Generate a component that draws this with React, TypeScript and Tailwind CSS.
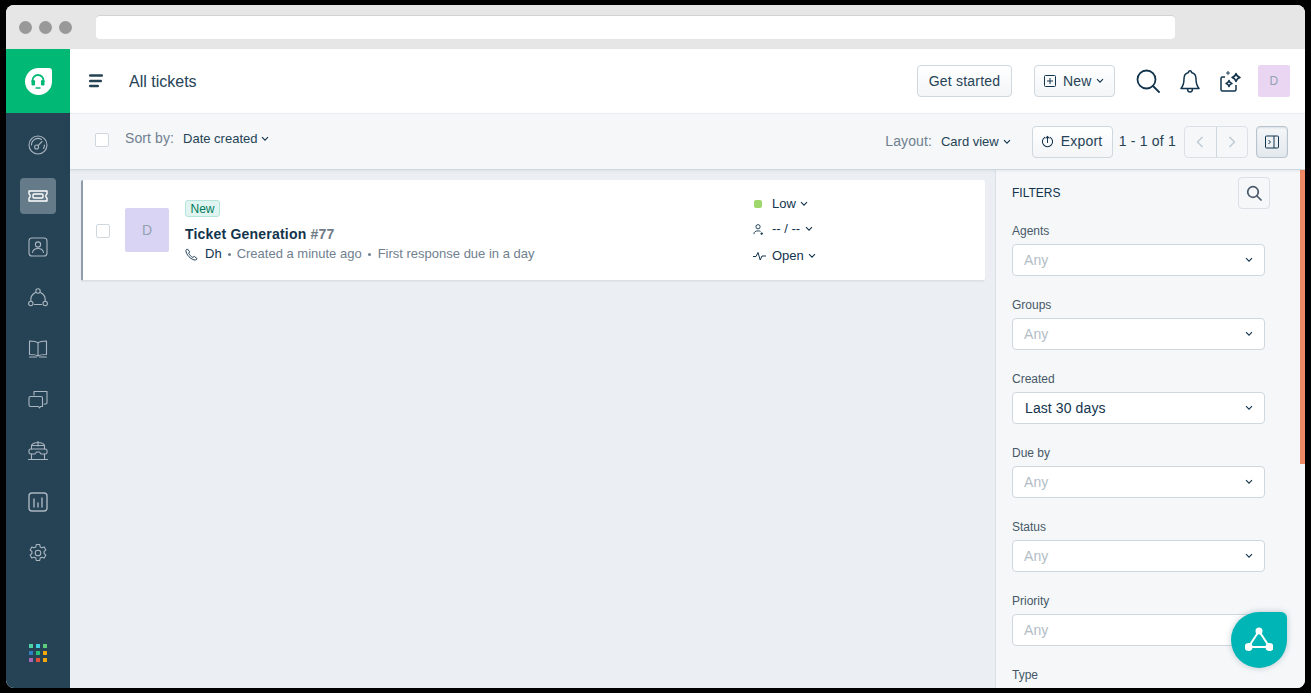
import React from "react";

const Chev = ({ className = "" }: { className?: string }) => (
  <svg viewBox="0 0 8 6" width="8" height="6" className={className} fill="none" stroke="#12344d" strokeWidth="1.1">
    <path d="M1 1.2 4 4.2 7 1.2" />
  </svg>
);

const NavIcon = ({ children }: { children: React.ReactNode }) => (
  <svg viewBox="0 0 20 20" width="20" height="20" fill="none" stroke="#aab6c0" strokeWidth="1.1" strokeLinecap="round" strokeLinejoin="round">
    {children}
  </svg>
);

const nav: React.ReactNode[] = [
  <NavIcon>
    <circle cx="10" cy="10" r="9" />
    <path d="M3.5 10a6.5 6.5 0 0 1 10-5.5M16.5 10a6.5 6.5 0 0 1-1 3.4" />
    <circle cx="8.6" cy="12" r="2" />
    <path d="M10 10.6 14 6.5" />
  </NavIcon>,
  <svg viewBox="0 0 20 20" width="20" height="20" fill="none" stroke="#fff" strokeWidth="1.4" strokeLinejoin="round">
    <path d="M1 4h18v2.8a2.6 2.6 0 0 0 0 4.4V14H1v-2.8a2.6 2.6 0 0 0 0-4.4z" transform="translate(0 1)" />
    <rect x="5" y="7" width="10" height="4" rx="1" transform="translate(0 1)" />
  </svg>,
  <NavIcon>
    <rect x="1" y="1" width="18" height="18" rx="3" />
    <circle cx="10" cy="7.5" r="2.6" />
    <path d="M4.5 15.5c.6-3 2.8-4 5.5-4s4.9 1 5.5 4" />
  </NavIcon>,
  <NavIcon>
    <circle cx="10" cy="3" r="2.2" />
    <circle cx="2.8" cy="15.5" r="2.2" />
    <circle cx="17.2" cy="15.5" r="2.2" />
    <path d="M7.5 4.5a8.5 8.5 0 0 0-4.7 8.500M12.5 4.5a8.5 8.5 0 0 1 4.7 8.500M6.5 16.5h7" />
  </NavIcon>,
  <NavIcon>
    <path d="M10 4C8.5 2.5 5 2 1.5 2v13.5c3.500 0 7 .5 8.500 1.500 1.500-1 5-1.500 8.500-1.500V2C15 2 11.500 2.500 10 4zM10 4v13M1.5 18h7M11.500 18h7" />
  </NavIcon>,
  <NavIcon>
    <path d="M6 5V1.500h13v11a1.500 1.500 0 0 1-1.500 1.500h-1.500" />
    <path d="M2.500 6.500h10.500a1.500 1.500 0 0 1 1.500 1.500v8.500h-2l-1 1.500-1-1.500H2.500A1.500 1.500 0 0 1 1 15V8a1.500 1.500 0 0 1 1.500-1.500z" />
  </NavIcon>,
  <NavIcon>
    <path d="M3.500 8V4.500C3.500 3 6.500 1.500 10 1.500s6.500 1.500 6.500 3V8M10 .5V5M3.500 4.500h13" />
    <path d="M1 9.500c0-1 .8-1.500 1.800-1.500h14.400c1 0 1.800.5 1.800 1.500v2c0 1-.8 1.500-1.800 1.500H13l-1.500-2h-3L7 13H2.800c-1 0-1.800-.5-1.800-1.500z" />
    <path d="M3.500 13v5.500M16.500 13v5.500M.5 18.500h19" />
  </NavIcon>,
  <NavIcon>
    <rect x="1" y="1" width="18" height="18" rx="3" strokeWidth="1.4" />
    <path d="M6 7v8M10 11v4M14 6v9" strokeWidth="1.4" />
  </NavIcon>,
  <NavIcon>
    <path d="M8.300 1.500h3.400l.5 2.400 1.700.9 2.300-.9 1.700 3-1.800 1.600v2l1.800 1.600-1.700 3-2.300-.9-1.700.9-.5 2.400H8.300l-.5-2.400-1.700-.9-2.300.9-1.700-3 1.800-1.600v-2L2.100 6.900l1.700-3 2.300.9 1.700-.9z" />
    <circle cx="10" cy="10" r="2.8" />
  </NavIcon>,
];

const dots = ["#4fd1a5", "#3fd0e0", "#5ccb7c", "#2f7fc1", "#27c37a", "#f5a70a", "#a568b8", "#e5503a", "#f5a70a"];

const filters = [
  { label: "Agents", value: "Any" },
  { label: "Groups", value: "Any" },
  { label: "Created", value: "Last 30 days", on: true },
  { label: "Due by", value: "Any" },
  { label: "Status", value: "Any" },
  { label: "Priority", value: "Any" },
];

export default function App() {
  return (
    <div className="h-[693px] w-[1311px] overflow-hidden bg-black pt-[5px] pl-[6px] font-['Liberation_Sans',Arial,sans-serif] text-[#12344d]">
      <div className="relative flex h-[683px] w-[1299px] flex-col overflow-hidden rounded-[8px] bg-white">
        {/* browser chrome */}
        <div className="flex h-[44px] shrink-0 items-center bg-[#e6e6e6] pl-[13px]">
          <div className="flex gap-[7px]">
            <span className="h-[13px] w-[13px] rounded-full bg-[#999]" />
            <span className="h-[13px] w-[13px] rounded-full bg-[#999]" />
            <span className="h-[13px] w-[13px] rounded-full bg-[#999]" />
          </div>
          <div className="mt-[-1px] ml-[24px] h-[24px] w-[1079px] rounded-[4px] border-t border-[#d2d2d2] bg-white" />
        </div>

        <div className="flex min-h-0 flex-1">
          {/* sidebar */}
          <aside className="flex w-[64px] shrink-0 flex-col items-center bg-[#264356]">
            <div className="flex h-[64px] w-full shrink-0 items-center justify-center bg-[#02b875]">
              <div className="flex h-[27px] w-[27px] items-center justify-center rounded-[13.5px] rounded-tr-[3px] bg-white">
                <svg viewBox="0 0 18 18" width="18" height="18" fill="none" stroke="#02b875" strokeWidth="1.8">
                  <path d="M3.5 10V8.5a5.5 5.5 0 0 1 11 0V10" />
                  <rect x="2.5" y="8" width="3.5" height="5.5" rx="1.2" fill="#02b875" stroke="none" />
                  <rect x="12" y="8" width="3.5" height="5.5" rx="1.2" fill="#02b875" stroke="none" />
                  <path d="M6.5 16h5" strokeWidth="1.6" />
                </svg>
              </div>
            </div>
            <div className="flex flex-col items-center gap-[15px] pt-[14px]">
              {nav.map((icon, i) => (
                <div key={i} className={`flex h-[36px] w-[36px] items-center justify-center rounded-[4px] ${i === 1 ? "bg-[#667b8a]" : ""}`}>
                  {icon}
                </div>
              ))}
            </div>
            <div className="mt-auto mb-[26px] grid grid-cols-3 gap-[3px]">
              {dots.map((c, i) => (
                <span key={i} className="h-[4px] w-[4px]" style={{ backgroundColor: c }} />
              ))}
            </div>
          </aside>

          {/* main */}
          <div className="flex min-w-0 flex-1 flex-col">
            {/* header */}
            <header className="flex h-[65px] shrink-0 items-center border-b border-[#ebeff3] bg-white pr-[15px] pl-[19px]">
              <svg viewBox="0 0 14 14" width="14" height="14" fill="none" stroke="#264356" strokeWidth="2.5" strokeLinecap="round">
                <path d="M1.2 1.5h11.600M1.200 7h10.600M1.200 12h7.600" />
              </svg>
              <h1 className="mt-[2px] ml-[26px] text-[16px] text-[#264356]">All tickets</h1>
              <div className="ml-auto flex items-center text-[14px] tracking-[0.2px] text-[#264356]">
                <button className="h-[32px] w-[95px] rounded-[4px] border border-[#cfd7df] bg-gradient-to-b from-white to-[#f3f5f7]">Get started</button>
                <button className="ml-[22px] flex h-[32px] w-[81px] items-center rounded-[4px] border border-[#cfd7df] bg-gradient-to-b from-white to-[#f3f5f7] pl-[9px]">
                  <svg viewBox="0 0 12 12" width="12" height="12" fill="none" stroke="#12344d" strokeWidth="1">
                    <rect x=".5" y=".5" width="11" height="11" rx="1" />
                    <path d="M6 3v6M3 6h6" />
                  </svg>
                  <span className="ml-[7px]">New</span>
                  <Chev className="ml-[4px]" />
                </button>
                <svg viewBox="0 0 24 24" width="24" height="24" fill="none" stroke="#12344d" strokeWidth="1.8" className="ml-[21px]" strokeLinecap="round">
                  <circle cx="10.5" cy="10.5" r="9" />
                  <path d="M17 17l6 6" />
                </svg>
                <svg viewBox="0 0 20 24" width="20" height="24" fill="none" stroke="#12344d" strokeWidth="1.5" className="ml-[20px]" strokeLinejoin="round">
                  <path d="M10 1.8a1.500 1.500 0 0 1 1.500 1.700c3 .7 4.500 3.200 4.500 6.300 0 4.500.8 7.200 3 9.700H1c2.200-2.500 3-5.200 3-9.700 0-3.100 1.500-5.600 4.500-6.300A1.500 1.500 0 0 1 10 1.800z" />
                  <path d="M7.500 19.500c0 2.300 1 3.500 2.500 3.500s2.500-1.200 2.500-3.500" />
                </svg>
                <svg viewBox="0 0 22 22" width="22" height="22" fill="none" stroke="#12344d" strokeWidth="1.5" className="ml-[20px]" strokeLinejoin="round">
                  <path d="M5 7H2.500A1.500 1.500 0 0 0 1 8.500v11A1.500 1.500 0 0 0 2.500 21h12a1.500 1.500 0 0 0 1.500-1.500V15" />
                  <path d="M16 3.500c.6 2.300 1.700 3.400 4 4-2.300.6-3.400 1.700-4 4-.6-2.300-1.700-3.400-4-4 2.300-.6 3.400-1.700 4-4z" />
                  <path d="M9 10.500c.4 1.800 1.200 2.600 3 3-1.800.4-2.600 1.200-3 3-.4-1.800-1.200-2.600-3-3 1.800-.4 2.600-1.200 3-3z" />
                  <path d="M8 1.500c.2.800.7 1.300 1.500 1.500-.8.200-1.300.7-1.500 1.500-.2-.8-.7-1.300-1.500-1.500.8-.2 1.300-.7 1.500-1.500z" strokeWidth="1" />
                </svg>
                <div className="ml-[16px] flex h-[32px] w-[32px] items-center justify-center rounded-[2px] bg-[#ead6f3] text-[12px] text-[#92a2b1]">D</div>
              </div>
            </header>

            {/* toolbar */}
            <div className="z-10 flex h-[56px] shrink-0 items-center border-b border-[#cfd7df] bg-[#f5f7f9] pr-[17px] pl-[25px] text-[#264356] shadow-[0_1px_3px_rgba(18,52,77,0.08)]">
              <span className="mb-[4px] h-[14px] w-[14px] rounded-[2px] border border-[#cfd7df] bg-white" />
              <span className="mb-[6px] ml-[16px] text-[14px] tracking-[0.1px] text-[#70808f]">Sort by:</span>
              <span className="mb-[5px] ml-[9px] flex items-center text-[13px]">
                Date created
                <Chev className="ml-[4px]" />
              </span>
              <div className="ml-auto flex items-center">
                <span className="text-[14px] tracking-[0.1px] text-[#70808f]">Layout:</span>
                <span className="ml-[9px] flex items-center text-[13px]">
                  Card view
                  <Chev className="ml-[4px]" />
                </span>
                <button className="ml-[21px] flex h-[32px] w-[81px] items-center rounded-[4px] border border-[#cfd7df] bg-gradient-to-b from-white to-[#f3f5f7] pl-[8px] text-[14px] tracking-[0.2px]">
                  <svg viewBox="0 0 14 14" width="13" height="13" fill="none" stroke="#12344d" strokeWidth="1.1" strokeLinecap="round" className="mb-[1px]">
                    <path d="M4 2.500a5.500 5.500 0 1 0 6 0M7 8V1.500M5.200 3.300 7 1.500l1.800 1.800" />
                  </svg>
                  <span className="ml-[7px]">Export</span>
                </button>
                <span className="mb-[1px] ml-[6px] text-[14px] tracking-[0.2px]">1 - 1 of 1</span>
                <div className="ml-[8px] flex h-[32px] w-[64px] rounded-[4px] border border-[#dbe1e7] bg-[#f5f7f9]">
                  <span className="flex flex-1 items-center justify-center border-r border-[#cfd7df]">
                    <svg viewBox="0 0 8 12" width="8" height="12" fill="none" stroke="#c0cad3" strokeWidth="1.5"><path d="M6.5 1 1.5 6l5 5" /></svg>
                  </span>
                  <span className="flex flex-1 items-center justify-center">
                    <svg viewBox="0 0 8 12" width="8" height="12" fill="none" stroke="#c0cad3" strokeWidth="1.5"><path d="M1.5 1l5 5-5 5" /></svg>
                  </span>
                </div>
                <button className="ml-[8px] flex h-[32px] w-[32px] items-center justify-center rounded-[4px] border border-[#b9c4ce] bg-gradient-to-b from-[#f5f7f9] to-[#e4e9ee] shadow-[inset_0_1px_2px_rgba(18,52,77,0.12)]">
                  <svg viewBox="0 0 14 14" width="14" height="14" fill="none" stroke="#12344d" strokeWidth="1">
                    <rect x=".5" y="1" width="13" height="12" rx="1" />
                    <path d="M9 1v12M3.500 5l2 2-2 2" />
                  </svg>
                </button>
              </div>
            </div>

            <div className="flex min-h-0 flex-1">
              {/* ticket list */}
              <div className="w-[925px] shrink-0 bg-[#ebeff3] pt-[10px] pr-[10px] pl-[11px]">
                <div className="flex h-[101px] rounded-[2px] border-b border-l-2 border-[#dbe1e7] border-l-[#8d9dab] bg-white shadow-[0_1px_1px_rgba(18,52,77,0.05)]">
                  <span className="mt-[44px] ml-[13px] h-[14px] w-[14px] rounded-[2px] border border-[#cfd7df] bg-white" />
                  <div className="mt-[28px] ml-[15px] flex h-[44px] w-[44px] items-center justify-center rounded-[2px] bg-[#dad4f4] text-[14px] text-[#92a2b1]">D</div>
                  <div className="ml-[16px] w-[568px] pt-[20px]">
                    <span className="flex h-[17px] w-[35px] items-center justify-center rounded-[3px] border border-[#b4e5da] bg-[#e0f5f1] text-[12px] text-[#00795b]">New</span>
                    <div className="mt-[8px] text-[14px] leading-[18px] font-bold tracking-[0.2px] text-[#12344d]">
                      Ticket Generation <span className="text-[#6f7c87]">#77</span>
                    </div>
                    <div className="mt-[2px] flex items-center text-[13px] leading-[18px] text-[#70808f]">
                      <svg viewBox="0 0 14 14" width="13" height="13" fill="none" stroke="#12344d" strokeWidth="1" strokeLinejoin="round">
                        <path d="M2.5 1 1 2.5C.8 7 6.5 13 11.5 13L13 11.500l-3-2.500-1.500 1.200C6.500 9.300 4.800 7.500 4 5.500L5 4z" />
                      </svg>
                      <span className="ml-[7px] text-[#12344d]">Dh</span>
                      <span className="mr-[6px] ml-[6px] h-[3px] w-[3px] rounded-full bg-[#70808f]" />
                      <span>Created a minute ago</span>
                      <span className="mr-[7px] ml-[6px] h-[3px] w-[3px] rounded-full bg-[#70808f]" />
                      <span>First response due in a day</span>
                    </div>
                  </div>
                  <div className="pt-[15px] text-[13px] text-[#12344d]">
                    <div className="flex h-[18px] items-center">
                      <span className="ml-[1px] h-[8px] w-[8px] rounded-[2px] bg-[#a0d76a]" />
                      <span className="ml-[10px]">Low</span>
                      <Chev className="ml-[4px]" />
                    </div>
                    <div className="mt-[7px] flex h-[18px] items-center">
                      <svg viewBox="0 0 12 12" width="11" height="11" fill="none" stroke="#12344d" strokeWidth="1">
                        <circle cx="5.5" cy="3" r="2.3" />
                        <path d="M1 11c0-2.500 2-3.500 4.500-3.500 1 0 2 .2 2.700.6M8 10.500h3M9.500 9v3" />
                      </svg>
                      <span className="ml-[8px]">-- / --</span>
                      <Chev className="ml-[5px]" />
                    </div>
                    <div className="mt-[9px] flex h-[18px] items-center">
                      <svg viewBox="0 0 13 10" width="13" height="10" fill="none" stroke="#12344d" strokeWidth="1">
                        <path d="M0 5.500h3l2-4 2.200 7.500L9 5h4" />
                      </svg>
                      <span className="ml-[6px]">Open</span>
                      <Chev className="ml-[4px]" />
                    </div>
                  </div>
                </div>
              </div>

              {/* filters */}
              <aside className="flex min-w-0 flex-1 overflow-hidden border-l border-[#dbe1e7] bg-[#f5f7f9]">
                <div className="w-[304px] shrink-0 pl-[16px]">
                  <div className="flex h-[46px] items-center justify-between pr-[30px]">
                    <span className="text-[12px] text-[#12344d]">FILTERS</span>
                    <button className="mt-[-1px] flex h-[32px] w-[32px] items-center justify-center rounded-[4px] border border-[#dbe1e7] bg-[#f5f7f9]">
                      <svg viewBox="0 0 16 16" width="16" height="16" fill="none" stroke="#475867" strokeWidth="1.7" strokeLinecap="round">
                        <circle cx="7" cy="7" r="5.3" />
                        <path d="M11 11l4 4" />
                      </svg>
                    </button>
                  </div>
                  <div className="flex flex-col gap-[21px] pt-[7px]">
                    {filters.map((f) => (
                      <div key={f.label}>
                        <div className="text-[12px] leading-[16px] text-[#475867]">{f.label}</div>
                        <div className="mt-[5px] flex h-[32px] w-[253px] items-center justify-between rounded-[4px] border border-[#cfd7df] bg-white pr-[11px] pl-[11px]">
                          <span className={`text-[14px] tracking-[0.1px] ${f.on ? "pl-[1px] text-[#12344d]" : "text-[#b3bdc7]"}`}>{f.value}</span>
                          <Chev />
                        </div>
                      </div>
                    ))}
                    <div className="text-[12px] leading-[16px] text-[#475867]">Type</div>
                  </div>
                </div>
                <div className="h-[294px] w-[5px] shrink-0 bg-[#f08a64]" />
              </aside>
            </div>
          </div>
        </div>

        {/* floating button */}
        <div className="absolute top-[607px] left-[1225px] flex h-[56px] w-[56px] items-center justify-center rounded-[28px] rounded-tr-[6px] bg-[#00b5b5] shadow-[0_0_6px_rgba(18,52,77,0.25)]">
          <svg viewBox="0 0 28 28" width="28" height="28" fill="#fff" stroke="#fff" strokeWidth="2">
            <path d="M14 5 3.5 21h21z" fill="none" />
            <circle cx="14" cy="5" r="3.5" stroke="none" />
            <circle cx="3.5" cy="21" r="4" stroke="none" />
            <circle cx="24.5" cy="21" r="4" stroke="none" />
          </svg>
        </div>
      </div>
    </div>
  );
}
